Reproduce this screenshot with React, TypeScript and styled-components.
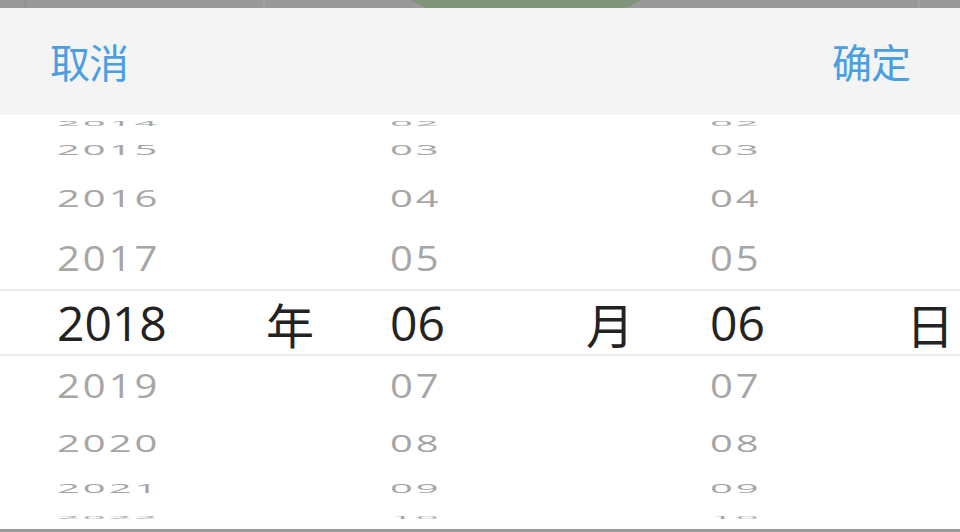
import React from 'react';
import styled, { createGlobalStyle } from 'styled-components';

const GlobalStyle = createGlobalStyle`
  html, body {
    margin: 0;
    padding: 0;
    background: #999999;
  }
  body {
    font-family: 'Open Sans', 'Noto Sans CJK SC', sans-serif;
  }
`;

// row heights / vertical squish of the wheel, top to bottom
const ROWS = [
  { height: 15, scale: 0.2 },
  { height: 40, scale: 0.36 },
  { height: 56, scale: 0.6 },
  { height: 64, scale: 0.87 },
  { height: 65, scale: 1 },
  { height: 62, scale: 0.8 },
  { height: 52, scale: 0.6 },
  { height: 38, scale: 0.32 },
  { height: 20, scale: 0.1 },
];
const SELECTED = 4;

const pad = (n: number) => (n < 10 ? `0${n}` : `${n}`);

const columns = [
  { key: 'year', unit: '年', start: 57, values: [2014, 2015, 2016, 2017, 2018, 2019, 2020, 2021, 2022].map(String) },
  { key: 'month', unit: '月', start: 70, values: [2, 3, 4, 5, 6, 7, 8, 9, 10].map(pad) },
  { key: 'day', unit: '日', start: 70, values: [2, 3, 4, 5, 6, 7, 8, 9, 10].map(pad) },
];

const Screen = styled.div`
  width: 960px;
  height: 532px;
  display: flex;
  flex-direction: column;
  overflow: hidden;
`;

const Backdrop = styled.div`
  height: 8px;
  flex: 0 0 8px;
  background:
    radial-gradient(circle 242px at 526px -212px, #7f9479 241px, rgba(0, 0, 0, 0) 242px),
    linear-gradient(90deg, transparent 24px, #929292 24px, #929292 26px, transparent 26px,
      transparent 263px, #a3a3a3 263px, #a3a3a3 265px, transparent 265px,
      transparent 918px, #a1a1a1 918px, #a1a1a1 920px, transparent 920px),
    #999999;
`;

const Sheet = styled.div`
  flex: 0 0 521px;
  display: flex;
  flex-direction: column;
  background: #ffffff;
`;

const Header = styled.div`
  height: 107px;
  flex: 0 0 107px;
  display: flex;
  align-items: center;
  justify-content: space-between;
  padding: 0 50px;
  box-sizing: border-box;
  background: #f4f4f4;
`;

const HeaderButton = styled.button`
  border: none;
  background: none;
  padding: 0;
  margin-bottom: 2px;
  font-family: 'Noto Sans CJK SC', sans-serif;
  font-size: 40px;
  line-height: 1;
  letter-spacing: -1px;
  color: #4a9fe2;
  cursor: pointer;
`;

const Wheels = styled.div`
  display: grid;
  grid-template-columns: repeat(3, 320px);
`;

const Wheel = styled.div`
  display: flex;
  flex-direction: column;
`;

const Row = styled.div<{ $height: number; $start: number; $selected?: boolean }>`
  height: ${(p) => p.$height}px;
  display: flex;
  align-items: center;
  overflow: hidden;
  padding-left: ${(p) => p.$start}px;
  ${(p) =>
    p.$selected &&
    `
    box-sizing: border-box;
    height: ${p.$height + 2}px;
    margin: -1px 0;
    border-top: 2px solid #ebebeb;
    border-bottom: 2px solid #ebebeb;
  `}
`;

const Value = styled.span<{ $scale: number }>`
  display: inline-block;
  font-size: 40px;
  line-height: 1;
  letter-spacing: 3px;
  color: #a6a6a6;
  transform: scaleY(${(p) => p.$scale});
  transform-origin: center;
`;

const Current = styled.span`
  font-size: 48px;
  line-height: 1;
  color: #222222;
`;

const Unit = styled.span`
  margin-left: auto;
  margin-right: 6px;
  font-family: 'Noto Sans CJK SC', sans-serif;
  font-size: 48px;
  line-height: 1;
  color: #222222;
`;

export default function App() {
  return (
    <Screen>
      <GlobalStyle />
      <Backdrop />
      <Sheet>
        <Header>
          <HeaderButton>取消</HeaderButton>
          <HeaderButton>确定</HeaderButton>
        </Header>
        <Wheels>
          {columns.map((col) => (
            <Wheel key={col.key}>
              {col.values.map((v, i) =>
                i === SELECTED ? (
                  <Row key={v} $height={ROWS[i].height} $start={col.start} $selected>
                    <Current>{v}</Current>
                    <Unit>{col.unit}</Unit>
                  </Row>
                ) : (
                  <Row key={v} $height={ROWS[i].height} $start={col.start}>
                    <Value $scale={ROWS[i].scale}>{v}</Value>
                  </Row>
                ),
              )}
            </Wheel>
          ))}
        </Wheels>
      </Sheet>
    </Screen>
  );
}
